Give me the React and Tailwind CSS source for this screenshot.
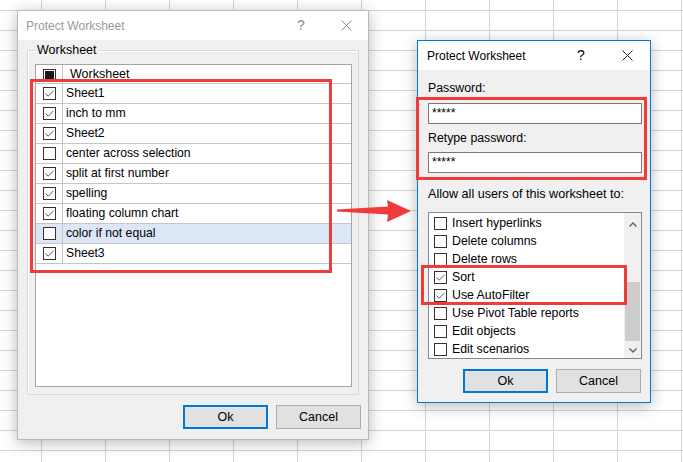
import React from "react";

function Box({ checked, mixed }) {
  return (
    <svg width="13" height="13" viewBox="0 0 13 13" className="block shrink-0">
      <rect x="0.5" y="0.5" width="12" height="12" fill="#fff" stroke="#333" />
      {checked && (
        <path d="M2.5 6.5 L5.2 9.2 L10.5 3.8" fill="none" stroke="#5a5a5a" strokeWidth="1" />
      )}
      {mixed && <rect x="2" y="2" width="9" height="9" fill="#1a1a1a" />}
    </svg>
  );
}

function CloseX({ color }) {
  return (
    <svg width="11" height="11" viewBox="0 0 11 11" className="block">
      <path d="M0.5 0.5 L10.5 10.5 M10.5 0.5 L0.5 10.5" stroke={color} strokeWidth="1" />
    </svg>
  );
}

function Btn({ children, primary }) {
  return (
    <div
      className={
        "h-[24px] w-[85px] flex items-center justify-center bg-[#e1e1e1] text-[12.5px] text-black " +
        (primary ? "border-2 border-[#0078d7]" : "border border-[#adadad]")
      }
    >
      {children}
    </div>
  );
}

const sheets = [
  ["Sheet1", true],
  ["inch to mm", true],
  ["Sheet2", true],
  ["center across selection", false],
  ["split at first number", true],
  ["spelling", true],
  ["floating column chart", true],
  ["color if not equal", false, true],
  ["Sheet3", true],
];

const perms = [
  ["Insert hyperlinks", false],
  ["Delete columns", false],
  ["Delete rows", false],
  ["Sort", true],
  ["Use AutoFilter", true],
  ["Use Pivot Table reports", false],
  ["Edit objects", false],
  ["Edit scenarios", false],
];

export default function App() {
  return (
    <div className="relative w-[683px] h-[462px] overflow-hidden bg-white font-['Liberation_Sans',Arial,sans-serif] text-[12px] bg-[linear-gradient(to_right,#d4d4d4_1px,transparent_1px),linear-gradient(to_bottom,#d4d4d4_1px,transparent_1px)] [background-size:64px_20px] [background-position:41px_10px]">
      {/* Left dialog */}
      <div className="absolute left-[17px] top-[10px] w-[352px] h-[430px] border border-[#b9b9b9] bg-[#f0f0f0] shadow-[0_3px_14px_rgba(0,0,0,0.28)] flex flex-col">
        <div className="h-[29px] bg-white flex items-center shrink-0">
          <div className="flex-1 pl-[8px] text-[#999999]">Protect Worksheet</div>
          <div className="w-[46px] flex justify-center text-[14px] text-[#8a8a8a]">?</div>
          <div className="w-[44px] flex justify-center">
            <CloseX color="#8a8a8a" />
          </div>
        </div>
        <div className="relative mt-[10px] ml-[9px] w-[332px] h-[345px] border border-[#d9d9d9] shadow-[inset_1px_1px_0_#ffffff]">
          <div className="absolute left-[8px] top-[-9px] bg-[#f0f0f0] px-[1px] leading-[16px] text-[12.5px] text-black">
            Worksheet
          </div>
          <div className="ml-[7px] mt-[13px] w-[317px] h-[323px] bg-white border border-[#a5a5a5]">
            <div className="h-[19px] flex border-b border-[#c6c6c6]">
              <div className="w-[27px] border-r border-[#c6c6c6] flex items-center justify-center pt-[2px]">
                <Box mixed />
              </div>
              <div className="pl-[7px] flex items-center text-[12.5px] text-black">Worksheet</div>
            </div>
            {sheets.map(([name, checked, hl]) => (
              <div
                key={name}
                className={"h-[20px] flex border-b border-[#c6c6c6] " + (hl ? "bg-[#dce6f6]" : "")}
              >
                <div className="w-[27px] border-r border-[#c6c6c6] flex items-center justify-center">
                  <Box checked={checked} />
                </div>
                <div className="pl-[3px] flex items-center text-[12.2px] text-black">{name}</div>
              </div>
            ))}
          </div>
        </div>
        <div className="mt-[10px] flex justify-end gap-[8px] pr-[7px]">
          <Btn primary>Ok</Btn>
          <Btn>Cancel</Btn>
        </div>
      </div>

      {/* Right dialog */}
      <div className="absolute left-[417px] top-[40px] w-[234px] h-[363px] border border-[#0078d7] bg-[#f0f0f0] shadow-[0_3px_14px_rgba(0,0,0,0.28)] flex flex-col">
        <div className="h-[29px] bg-white flex items-center shrink-0">
          <div className="flex-1 pl-[9px] text-black">Protect Worksheet</div>
          <div className="w-[46px] flex justify-center text-[14px] text-black">?</div>
          <div className="w-[46px] flex justify-center">
            <CloseX color="#222" />
          </div>
        </div>
        <div className="flex flex-col pl-[10px]">
          <div className="mt-[10px] h-[16px] leading-[16px] text-[12.3px] text-black">Password:</div>
          <div className="mt-[7px] w-[214px] h-[21px] bg-white border border-[#7a7a7a] pl-[3px] text-[12px] leading-[19px] text-black">
            *****
          </div>
          <div className="mt-[6px] h-[16px] leading-[16px] text-[12.3px] text-black">Retype password:</div>
          <div className="mt-[6px] w-[214px] h-[21px] bg-white border border-[#7a7a7a] pl-[3px] text-[12px] leading-[19px] text-black">
            *****
          </div>
          <div className="mt-[13px] h-[16px] leading-[16px] text-[12.6px] text-black whitespace-nowrap">
            Allow all users of this worksheet to:
          </div>
          <div className="mt-[10px] w-[214px] h-[147px] bg-white border border-[#828790] flex">
            <div className="flex-1 pt-[1px] pl-[5px] overflow-hidden">
              {perms.map(([name, checked]) => (
                <div key={name} className="h-[18px] flex items-center gap-[5px]">
                  <Box checked={checked} />
                  <span className="text-[12.3px] text-black whitespace-nowrap">{name}</span>
                </div>
              ))}
            </div>
            <div className="w-[17px] bg-[#f0f0f0] flex flex-col">
              <div className="h-[17px] flex items-center justify-center pt-[5px]">
                <svg width="8" height="5" viewBox="0 0 8 5">
                  <path d="M0.5 4.5 L4 1 L7.5 4.5" fill="none" stroke="#606060" strokeWidth="1.4" />
                </svg>
              </div>
              <div className="mt-[52px] h-[59px] mx-[1px] bg-[#cdcdcd]"></div>
              <div className="flex-1 flex items-end justify-center pb-[5px]">
                <svg width="8" height="5" viewBox="0 0 8 5">
                  <path d="M0.5 0.5 L4 4 L7.5 0.5" fill="none" stroke="#606060" strokeWidth="1.4" />
                </svg>
              </div>
            </div>
          </div>
          <div className="mt-[10px] flex gap-[8px] pl-[35px]">
            <Btn primary>Ok</Btn>
            <Btn>Cancel</Btn>
          </div>
        </div>
      </div>

      {/* Red highlight frames */}
      <div className="absolute left-[30px] top-[79px] w-[302px] h-[194px] border-[3px] border-[#ef3b3b]"></div>
      <div className="absolute left-[416px] top-[97px] w-[231px] h-[83px] border-[3px] border-[#ef3b3b]"></div>
      <div className="absolute left-[421px] top-[265px] w-[206px] h-[40px] border-[3px] border-[#ef3b3b]"></div>

      {/* Arrow */}
      <svg className="absolute left-0 top-0" width="683" height="462" viewBox="0 0 683 462">
        <polygon
          points="337,209.6 388,206.6 387,200 411,211 387,222 388,214.6 337,211.4"
          fill="#ef3b3b"
        />
      </svg>
    </div>
  );
}
